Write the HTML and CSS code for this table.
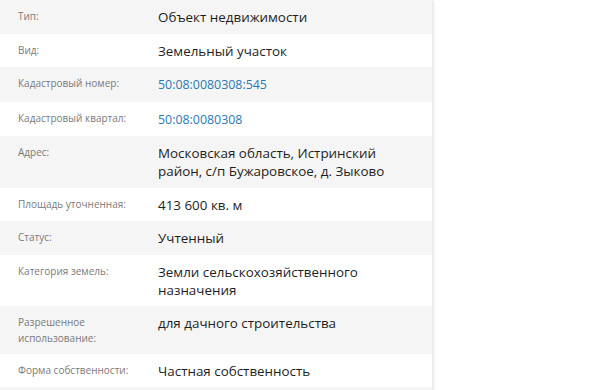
FILE: index.html
```html
<!DOCTYPE html>
<html lang="ru">
<head>
<meta charset="utf-8">
<title>Объект недвижимости</title>
<link rel="stylesheet" href="styles.css">
</head>
<body>
<div class="card">
  <div class="row"><div class="label">Тип:</div><div class="value">Объект недвижимости</div></div>
  <div class="row"><div class="label">Вид:</div><div class="value">Земельный участок</div></div>
  <div class="row"><div class="label">Кадастровый номер:</div><div class="value"><a class="link" href="#">50:08:0080308:545</a></div></div>
  <div class="row"><div class="label">Кадастровый квартал:</div><div class="value"><a class="link" href="#">50:08:0080308</a></div></div>
  <div class="row"><div class="label">Адрес:</div><div class="value">Московская область, Истринский район, с/п Бужаровское, д. Зыково</div></div>
  <div class="row"><div class="label">Площадь уточненная:</div><div class="value">413 600 кв. м</div></div>
  <div class="row"><div class="label">Статус:</div><div class="value">Учтенный</div></div>
  <div class="row"><div class="label">Категория земель:</div><div class="value">Земли сельскохозяйственного назначения</div></div>
  <div class="row"><div class="label">Разрешенное использование:</div><div class="value">для дачного строительства</div></div>
  <div class="row"><div class="label">Форма собственности:</div><div class="value">Частная собственность</div></div>
  <div class="row"><div class="label">&nbsp;</div><div class="value">&nbsp;</div></div>
</div>
</body>
</html>
```
FILE: styles.css
```css
html, body {
  margin: 0;
  padding: 0;
  background: #ffffff;
}
body {
  font-family: "Open Sans", "Liberation Sans", sans-serif;
  overflow: hidden;
  height: 390px;
}
.card {
  width: 432px;
  background: #ffffff;
  box-shadow: 2px 0 3px rgba(0, 0, 0, 0.09);
}
.row {
  display: grid;
  grid-template-columns: 140px 1fr;
  padding: 8px 24px 7.5px 18px;
}
.row:nth-child(odd) {
  background: #f5f5f5;
}
.label {
  font-size: 10px;
  line-height: 16px;
  color: #7a7a7a;
}
.value {
  font-size: 13.4px;
  line-height: 18px;
  color: #1e1e1e;
}
.link {
  color: #2a78b4;
  text-decoration: none;
  font-size: 12.4px;
}
```
